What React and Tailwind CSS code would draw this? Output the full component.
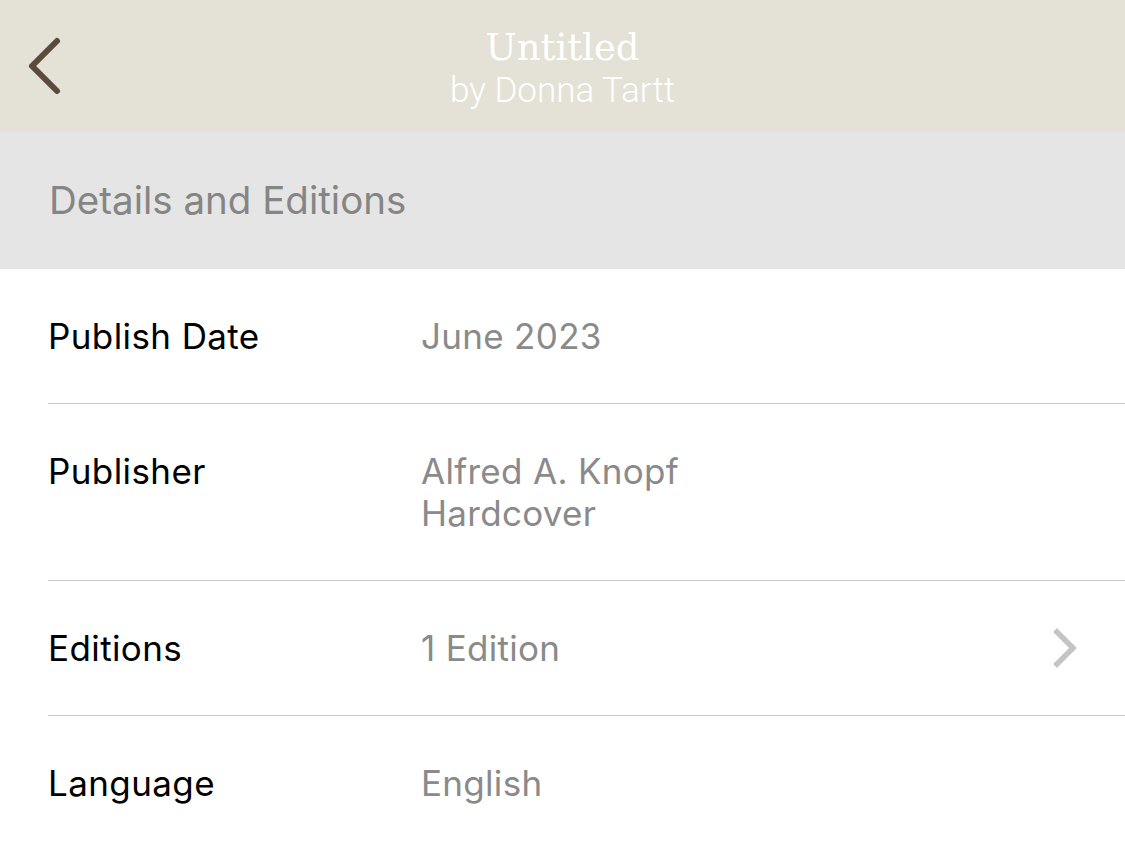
export default function App() {
  const rows = [
    { label: "Publish Date", values: ["June 2023"] },
    { label: "Publisher", values: ["Alfred A. Knopf", "Hardcover"] },
    { label: "Editions", values: ["1 Edition"], chevron: true },
    { label: "Language", values: ["English"] },
  ];
  return (
    <div className="w-[1125px] h-[842px] overflow-hidden bg-white" style={{ fontFamily: "Inter, 'Noto Sans', sans-serif" }}>
      <div className="relative h-[132px] bg-[#e4e2d6] flex flex-col items-center justify-center">
        <button className="absolute left-[24px] top-[36px] w-[40px] h-[60px] flex items-center justify-center">
          <svg width="40" height="60" viewBox="0 0 40 60" fill="none">
            <path d="M33 5 L8 30 L33 55" stroke="#5b4b3e" strokeWidth="6" strokeLinecap="round" strokeLinejoin="round" />
          </svg>
        </button>
        <div className="text-white text-[37px] leading-[44px] mt-[6px]" style={{ fontFamily: "'DejaVu Serif', 'Liberation Serif', serif" }}>Untitled</div>
        <div className="text-white text-[35px] leading-[42px] font-light" style={{ fontFamily: "Roboto, 'Noto Sans', sans-serif" }}>by Donna Tartt</div>
      </div>
      <div className="h-[137px] bg-[#e5e5e5] flex items-center pl-[49px]">
        <span className="text-[38.5px] text-[#858585]">Details and Editions</span>
      </div>
      <div className="pl-[48px]">
        {rows.map((r, i) => (
          <div key={r.label} className={`flex items-start pt-[46px] pb-[46px] ${i < rows.length - 1 ? "border-b border-[#c8c8c8]" : ""}`}>
            <div className="w-[373px] text-[35px] leading-[42px] tracking-[0.4px] text-black">{r.label}</div>
            <div className="flex-1 text-[35px] text-[#8a8a8a] leading-[42px] tracking-[0.3px]">
              {r.values.map((v) => (
                <div key={v}>{v}</div>
              ))}
            </div>
            {r.chevron && (
              <svg className="mr-[46px] mt-[1px]" width="28" height="40" viewBox="0 0 28 40" fill="none">
                <path d="M6 4 L22 20 L6 36" stroke="#c4c4c4" strokeWidth="5.5" strokeLinecap="square" />
              </svg>
            )}
          </div>
        ))}
      </div>
    </div>
  );
}
